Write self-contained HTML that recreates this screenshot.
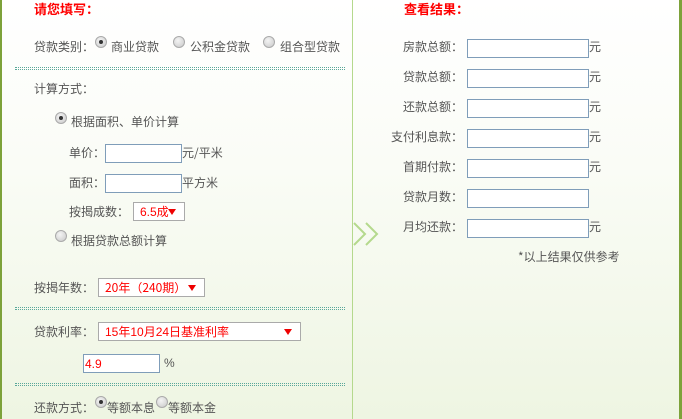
<!DOCTYPE html>
<html><head><meta charset="utf-8"><style>
*{margin:0;padding:0;box-sizing:border-box}
body{width:682px;height:419px;overflow:hidden;position:relative;font:12px "Liberation Sans","Noto Sans CJK SC",sans-serif;color:#555;background:linear-gradient(#fff 0,#fafcf6 40%,#eef5e2 100%)}
.a{position:absolute;white-space:nowrap;line-height:14px}
.c{font-family:"Noto Sans CJK SC","Liberation Sans",sans-serif}
.red{color:#f00;font-weight:bold;font-size:13px;font-family:"Noto Sans CJK SC",sans-serif}
.in{position:absolute;border:1px solid #7f9db9;background:#fff;height:19px}
.sel{position:absolute;border:1px solid #aaa;background:#fff;height:19px;color:#f00;padding:2px 16px 0 6px;line-height:14px;white-space:nowrap;overflow:hidden}
.sel:after{content:"";position:absolute;right:8px;top:6px;border:4px solid transparent;border-top:6px solid #e00;border-bottom:0}
.r{position:absolute;width:12px;height:12px;border-radius:50%;background:radial-gradient(circle at 40% 35%,#f4f4f4,#c8c8c8);border:1px solid #aaa}
.r.on:after{content:"";position:absolute;left:3px;top:3px;width:4px;height:4px;border-radius:50%;background:#333}
.dot{position:absolute;left:15px;width:330px;height:3px;border-top:1px dotted #5aa89a;border-bottom:1px dotted #5aa89a}
.lbl{position:absolute;width:120px;text-align:right;left:343px;line-height:14px;font-family:"Noto Sans CJK SC",sans-serif}
</style></head><body>
<div style="position:absolute;left:0;top:0;width:2px;height:419px;background:#7da23a"></div>
<div style="position:absolute;left:352px;top:0;width:1px;height:419px;background:#b5d98d"></div>
<div style="position:absolute;left:679px;top:0;width:3px;height:419px;background:#7da23a"></div>
<svg style="position:absolute;left:352px;top:220px" width="30" height="30"><path d="M2 3 L13 14 L2 25 M14 3 L25 14 L14 25" fill="none" stroke="#b5d98d" stroke-width="2"/></svg>

<div class="a red" style="left:34px;top:2px">请您填写：</div>
<div class="a c" style="left:34px;top:40px">贷款类别：</div>
<div class="r on" style="left:95px;top:36px"></div><div class="a c" style="left:111px;top:40px">商业贷款</div>
<div class="r" style="left:173px;top:36px"></div><div class="a c" style="left:190px;top:40px">公积金贷款</div>
<div class="r" style="left:263px;top:36px"></div><div class="a c" style="left:280px;top:40px">组合型贷款</div>
<div class="dot" style="top:67px"></div>
<div class="a c" style="left:34px;top:82px">计算方式：</div>
<div class="r on" style="left:55px;top:112px"></div><div class="a c" style="left:71px;top:115px">根据面积、单价计算</div>
<div class="a c" style="left:69px;top:146px">单价：</div><div class="in" style="left:105px;top:144px;width:77px"></div><div class="a c" style="left:182px;top:146px">元/平米</div>
<div class="a c" style="left:69px;top:176px">面积：</div><div class="in" style="left:105px;top:174px;width:77px"></div><div class="a c" style="left:182px;top:176px">平方米</div>
<div class="a c" style="left:69px;top:205px">按揭成数：</div><div class="sel" style="left:133px;top:202px;width:52px">6.5成</div>
<div class="r" style="left:55px;top:230px"></div><div class="a c" style="left:71px;top:234px">根据贷款总额计算</div>
<div class="a c" style="left:34px;top:281px">按揭年数：</div><div class="sel c" style="left:98px;top:278px;width:107px">20年（240期）</div>
<div class="dot" style="top:307px"></div>
<div class="a c" style="left:34px;top:325px">贷款利率：</div><div class="sel" style="left:98px;top:322px;width:203px">15年10月24日基准利率</div>
<div class="in" style="left:83px;top:354px;width:77px;color:#f00;padding:2px 0 0 1px;line-height:14px">4.9</div><div class="a" style="left:164px;top:356px">%</div>
<div class="dot" style="top:383px"></div>
<div class="a c" style="left:34px;top:401px">还款方式：</div>
<div class="r on" style="left:95px;top:396px"></div><div class="a c" style="left:107px;top:401px">等额本息</div>
<div class="r" style="left:156px;top:396px"></div><div class="a c" style="left:168px;top:401px">等额本金</div>

<div class="a red" style="left:404px;top:2px">查看结果：</div>
<div class="lbl" style="top:40px">房款总额：</div><div class="in" style="left:467px;top:39px;width:122px"></div><div class="a c" style="left:589px;top:40px">元</div>
<div class="lbl" style="top:70px">贷款总额：</div><div class="in" style="left:467px;top:69px;width:122px"></div><div class="a c" style="left:589px;top:70px">元</div>
<div class="lbl" style="top:100px">还款总额：</div><div class="in" style="left:467px;top:99px;width:122px"></div><div class="a c" style="left:589px;top:100px">元</div>
<div class="lbl" style="top:130px">支付利息款：</div><div class="in" style="left:467px;top:129px;width:122px"></div><div class="a c" style="left:589px;top:130px">元</div>
<div class="lbl" style="top:160px">首期付款：</div><div class="in" style="left:467px;top:159px;width:122px"></div><div class="a c" style="left:589px;top:160px">元</div>
<div class="lbl" style="top:190px">贷款月数：</div><div class="in" style="left:467px;top:189px;width:122px"></div>
<div class="lbl" style="top:220px">月均还款：</div><div class="in" style="left:467px;top:219px;width:122px"></div><div class="a c" style="left:589px;top:220px">元</div>
<div class="a c" style="left:518px;top:250px">*以上结果仅供参考</div>
</body></html>
